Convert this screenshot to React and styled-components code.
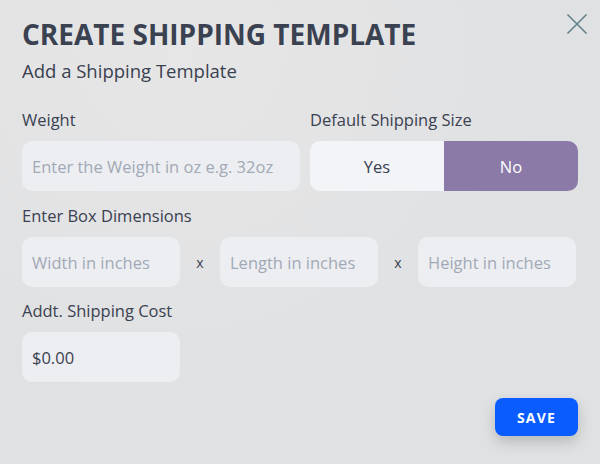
import React from "react";
import styled, { createGlobalStyle } from "styled-components";

const GlobalStyle = createGlobalStyle`
  * { box-sizing: border-box; }
  body {
    margin: 0;
    background: #e1e2e3;
    font-family: "Open Sans", "Noto Sans", sans-serif;
  }
`;

const Modal = styled.div`
  position: relative;
  width: 600px;
  height: 464px;
  padding: 17px 22px 0 22px;
  background: radial-gradient(ellipse at 30% 10%, #e6e6e7 0%, #e0e1e2 60%);
  color: #3a4150;
`;

const Close = styled.button`
  position: absolute;
  top: 13px;
  right: 12px;
  width: 22px;
  height: 22px;
  padding: 0;
  border: none;
  background: transparent;
  cursor: pointer;
  svg { display: block; }
`;

const Title = styled.h1`
  margin: 0;
  font-size: 28px;
  line-height: 34px;
  font-weight: 700;
  color: #3a4150;
`;

const Subtitle = styled.p`
  margin: 7px 0 0;
  font-size: 18.5px;
  line-height: 25px;
  font-weight: 500;
`;

const Row = styled.div`
  display: flex;
  align-items: flex-start;
  gap: ${(p) => p.gap ?? 10}px;
  margin-top: ${(p) => p.top || 0}px;
`;

const Field = styled.div`
  display: flex;
  flex-direction: column;
  width: ${(p) => p.width}px;
`;

const Label = styled.label`
  font-size: 16.5px;
  line-height: 22px;
  font-weight: 500;
  color: #3a4150;
  margin-bottom: 10px;
`;

const Input = styled.input`
  width: ${(p) => p.width || "100%"};
  height: 50px;
  padding: 0 10px;
  border: none;
  border-radius: 10px;
  background: #eceef2;
  font-family: inherit;
  font-size: 16.5px;
  color: #3a4150;
  outline: none;
  &::placeholder { color: #a2a9b6; }
`;

const Toggle = styled.div`
  display: flex;
  height: 50px;
  border-radius: 10px;
  overflow: hidden;
`;

const ToggleOption = styled.button`
  flex: 1;
  border: none;
  font-family: inherit;
  font-size: 16.5px;
  font-weight: 500;
  cursor: pointer;
  background: ${(p) => (p.active ? "#8b7aa8" : "#f2f4f7")};
  color: ${(p) => (p.active ? "#ffffff" : "#3a4150")};
`;

const Times = styled.span`
  width: 40px;
  height: 50px;
  display: flex;
  align-items: center;
  justify-content: center;
  font-size: 14px;
  color: #3a4150;
`;

const Footer = styled.div`
  display: flex;
  justify-content: flex-end;
  margin-top: 16px;
`;

const SaveButton = styled.button`
  width: 83px;
  height: 38px;
  border: none;
  border-radius: 8px;
  background: #0a5cff;
  color: #fff;
  font-family: inherit;
  font-size: 14px;
  font-weight: 700;
  letter-spacing: 1.2px;
  box-shadow: 0 6px 14px rgba(0, 0, 0, 0.18);
  cursor: pointer;
`;

export default function App() {
  return (
    <>
      <GlobalStyle />
      <Modal>
        <Close aria-label="Close">
          <svg width="22" height="22" viewBox="0 0 22 22">
            <path d="M1.5 1.5 L20.5 20.5 M20.5 1.5 L1.5 20.5" stroke="#5f7c8a" strokeWidth="1.5" fill="none" />
          </svg>
        </Close>
        <Title>CREATE SHIPPING TEMPLATE</Title>
        <Subtitle>Add a Shipping Template</Subtitle>

        <Row top={26}>
          <Field width={278}>
            <Label>Weight</Label>
            <Input placeholder="Enter the Weight in oz e.g. 32oz" />
          </Field>
          <Field width={268}>
            <Label>Default Shipping Size</Label>
            <Toggle>
              <ToggleOption>Yes</ToggleOption>
              <ToggleOption active>No</ToggleOption>
            </Toggle>
          </Field>
        </Row>

        <Row top={14}>
          <Field width={556}>
            <Label>Enter Box Dimensions</Label>
            <Row gap={0}>
              <Input width="158px" placeholder="Width in inches" />
              <Times>x</Times>
              <Input width="158px" placeholder="Length in inches" />
              <Times>x</Times>
              <Input width="158px" placeholder="Height in inches" />
            </Row>
          </Field>
        </Row>

        <Row top={13}>
          <Field width={158}>
            <Label>Addt. Shipping Cost</Label>
            <Input defaultValue="$0.00" />
          </Field>
        </Row>

        <Footer>
          <SaveButton>SAVE</SaveButton>
        </Footer>
      </Modal>
    </>
  );
}
